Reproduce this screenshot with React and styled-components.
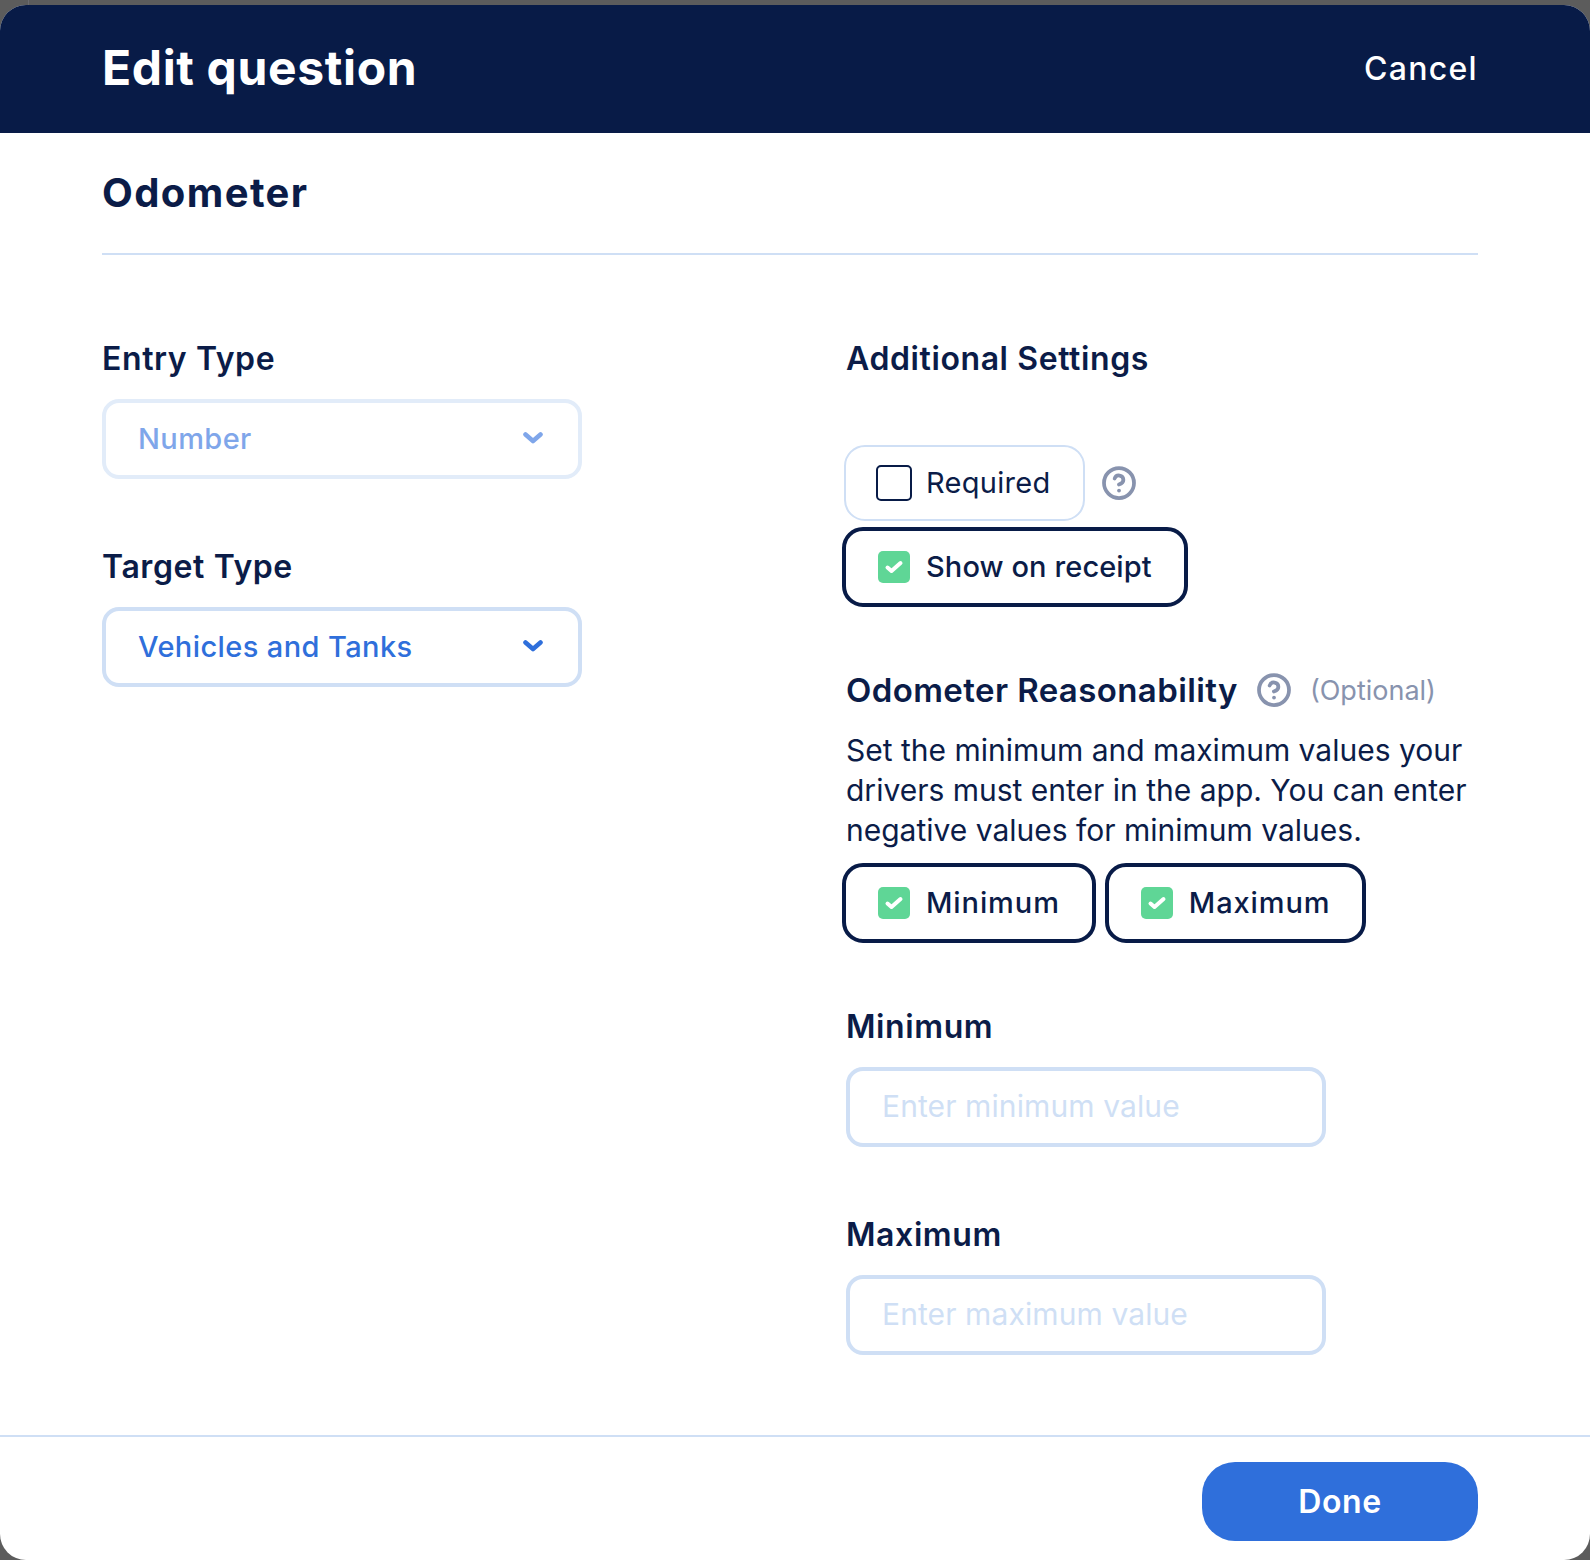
import React from "react";
import styled, { createGlobalStyle } from "styled-components";
import { CircleHelp } from "lucide-react";

const GlobalStyle = createGlobalStyle`
  html, body {
    margin: 0;
    padding: 0;
    background: #5c5c5c;
    font-family: "Inter", "Noto Sans", sans-serif;
    color: #0b1c48;
  }
  * {
    box-sizing: border-box;
  }
`;

const Page = styled.div`
  width: 1590px;
  height: 1560px;
  padding-top: 5px;
  background: linear-gradient(90deg, #5c5c5c 28px, #6b6b70 28px, #6b6b70 29px, #5c5c5c 29px);
`;

const Modal = styled.div`
  width: 100%;
  height: 1555px;
  display: flex;
  flex-direction: column;
  background: white;
  border-radius: 26px;
  overflow: hidden;
`;

const Header = styled.header`
  height: 128px;
  flex-shrink: 0;
  display: flex;
  align-items: center;
  justify-content: space-between;
  padding: 0 112px 3px 102px;
  background: #081b47;
  color: white;
`;

const Title = styled.h1`
  margin: 0;
  font-size: 48px;
  font-weight: 700;
  letter-spacing: 0.65px;
`;

const CancelLink = styled.a`
  padding-top: 2px;
  font-size: 32px;
  font-weight: 500;
  letter-spacing: 1.3px;
`;

const Body = styled.div`
  flex: 1;
  padding: 32px 112px 0 102px;
`;

const SectionTitle = styled.h2`
  margin: 0;
  height: 90px;
  font-size: 40px;
  line-height: 56px;
  font-weight: 700;
  letter-spacing: 1.4px;
  color: #0b1c48;
  border-bottom: 2px solid #cfdff5;
`;

const Columns = styled.div`
  display: grid;
  grid-template-columns: 744px 1fr;
  padding-top: 81px;
`;

const Column = styled.div`
  display: flex;
  flex-direction: column;
`;

const Field = styled.div`
  display: flex;
  flex-direction: column;
  margin-top: ${props => props.top || 0}px;
  margin-bottom: ${props => props.gap || 0}px;
`;

const Label = styled.label`
  height: 46px;
  margin-bottom: 17px;
  font-size: 32px;
  line-height: 46px;
  font-weight: 600;
  letter-spacing: 0.6px;
  color: #0b1c48;
`;

const SelectBox = styled.div`
  width: 480px;
  height: 80px;
  display: flex;
  align-items: center;
  justify-content: space-between;
  padding: 0 35px 2px 32px;
  border: 4px solid ${props => (props.muted ? "#e2ecf9" : "#cfdff5")};
  border-radius: 17px;
  font-size: 29px;
  font-weight: 500;
  letter-spacing: 0.4px;
  color: ${props => (props.muted ? "#7fa6ea" : "#2f6fdb")};
`;

const TextInput = styled.input`
  width: 480px;
  height: 80px;
  padding: 0 32px 2px;
  border: 4px solid #cfdff5;
  border-radius: 17px;
  outline: none;
  background: white;
  font-family: inherit;
  font-size: 30px;
  font-weight: 400;
  letter-spacing: 0.1px;
  &::placeholder {
    color: #cfdff5;
    opacity: 1;
  }
`;

const SettingsList = styled.div`
  display: flex;
  flex-direction: column;
  gap: 6px;
  margin: 46px 0 60px;
`;

const ChipRow = styled.div`
  display: flex;
  align-items: center;
  gap: ${props => props.gap || 0}px;
`;

const Chip = styled.div`
  height: ${props => (props.checked ? 80 : 76)}px;
  display: flex;
  align-items: center;
  gap: ${props => (props.checked ? 16 : 14)}px;
  margin-left: ${props => (props.first ? (props.checked ? -4 : -2) : 0)}px;
  padding: 0 32px 0 ${props => (props.checked ? 32 : 30)}px;
  border: ${props => (props.checked ? "4px solid #081b47" : "2px solid #cfdff5")};
  border-radius: 21px;
  font-size: 29px;
  font-weight: ${props => (props.checked ? 500 : 400)};
  letter-spacing: ${props => (props.wide ? 0.9 : props.checked ? 0.1 : 0.3)}px;
  color: #0b1c48;
`;

const ChipText = styled.span`
  margin-top: -2px;
`;

const CheckBox = styled.span`
  width: ${props => (props.checked ? 32 : 36)}px;
  height: ${props => (props.checked ? 32 : 36)}px;
  flex-shrink: 0;
  display: flex;
  align-items: center;
  justify-content: center;
  border: ${props => (props.checked ? "none" : "2px solid #081b47")};
  border-radius: 5px;
  background: ${props => (props.checked ? "#5fd696" : "white")};
`;

const HelpIcon = styled(CircleHelp)`
  width: 36px;
  height: 36px;
  flex-shrink: 0;
  margin-left: ${props => props.$offset}px;
  color: #8893ae;
`;

const SubHeading = styled.div`
  height: 46px;
  display: flex;
  align-items: center;
  font-size: 33px;
  font-weight: 600;
  letter-spacing: 0.4px;
  color: #0b1c48;
`;

const Optional = styled.span`
  margin-left: 18px;
  font-size: 27px;
  font-weight: 400;
  letter-spacing: 0;
  color: #8893ae;
`;

const HelpText = styled.p`
  width: 640px;
  margin: 17px 0 13px;
  font-size: 30px;
  line-height: 40px;
  font-weight: 400;
  color: #0b1c48;
`;

const Footer = styled.footer`
  height: 125px;
  flex-shrink: 0;
  display: flex;
  justify-content: flex-end;
  padding: 25px 112px 0 0;
  border-top: 2px solid #cfdff5;
`;

const DoneButton = styled.button`
  width: 276px;
  height: 79px;
  border: none;
  border-radius: 33px;
  background: #2f6fdb;
  color: white;
  font-family: inherit;
  font-size: 32px;
  font-weight: 600;
  letter-spacing: 0.6px;
`;

const Chevron = () => (
  <svg width="20" height="12" viewBox="0 0 20 12" fill="none">
    <path
      d="M2.5 2.5 L10 9 L17.5 2.5"
      stroke="currentColor"
      strokeWidth="4.6"
      strokeLinecap="round"
      strokeLinejoin="round"
    />
  </svg>
);

const Tick = () => (
  <svg width="20" height="16" viewBox="0 0 20 16" fill="none">
    <path
      d="M3.5 8.5 L7.5 12 L16.5 4"
      stroke="white"
      strokeWidth="4"
      strokeLinecap="round"
      strokeLinejoin="round"
    />
  </svg>
);

const Option = ({ checked, first, wide, children }) => (
  <Chip checked={checked} first={first} wide={wide}>
    <CheckBox checked={checked}>{checked && <Tick />}</CheckBox>
    <ChipText>{children}</ChipText>
  </Chip>
);

export default function App() {
  return (
    <Page>
      <GlobalStyle />
      <Modal>
        <Header>
          <Title>Edit question</Title>
          <CancelLink>Cancel</CancelLink>
        </Header>
        <Body>
          <SectionTitle>Odometer</SectionTitle>
          <Columns>
            <Column>
              <Field gap={65}>
                <Label>Entry Type</Label>
                <SelectBox muted>
                  Number
                  <Chevron />
                </SelectBox>
              </Field>
              <Field>
                <Label>Target Type</Label>
                <SelectBox>
                  Vehicles and Tanks
                  <Chevron />
                </SelectBox>
              </Field>
            </Column>
            <Column>
              <Label>Additional Settings</Label>
              <SettingsList>
                <ChipRow>
                  <Option first>Required</Option>
                  <HelpIcon $offset={16} strokeWidth={2.5} />
                </ChipRow>
                <ChipRow>
                  <Option checked first>
                    Show on receipt
                  </Option>
                </ChipRow>
              </SettingsList>
              <SubHeading>
                Odometer Reasonability
                <HelpIcon $offset={18} strokeWidth={2.5} />
                <Optional>(Optional)</Optional>
              </SubHeading>
              <HelpText>
                Set the minimum and maximum values your drivers must enter in
                the app. You can enter negative values for minimum values.
              </HelpText>
              <ChipRow gap={9}>
                <Option checked first wide>
                  Minimum
                </Option>
                <Option checked wide>
                  Maximum
                </Option>
              </ChipRow>
              <Field top={61} gap={65}>
                <Label htmlFor="min-value">Minimum</Label>
                <TextInput id="min-value" placeholder="Enter minimum value" />
              </Field>
              <Field>
                <Label htmlFor="max-value">Maximum</Label>
                <TextInput id="max-value" placeholder="Enter maximum value" />
              </Field>
            </Column>
          </Columns>
        </Body>
        <Footer>
          <DoneButton>Done</DoneButton>
        </Footer>
      </Modal>
    </Page>
  );
}
